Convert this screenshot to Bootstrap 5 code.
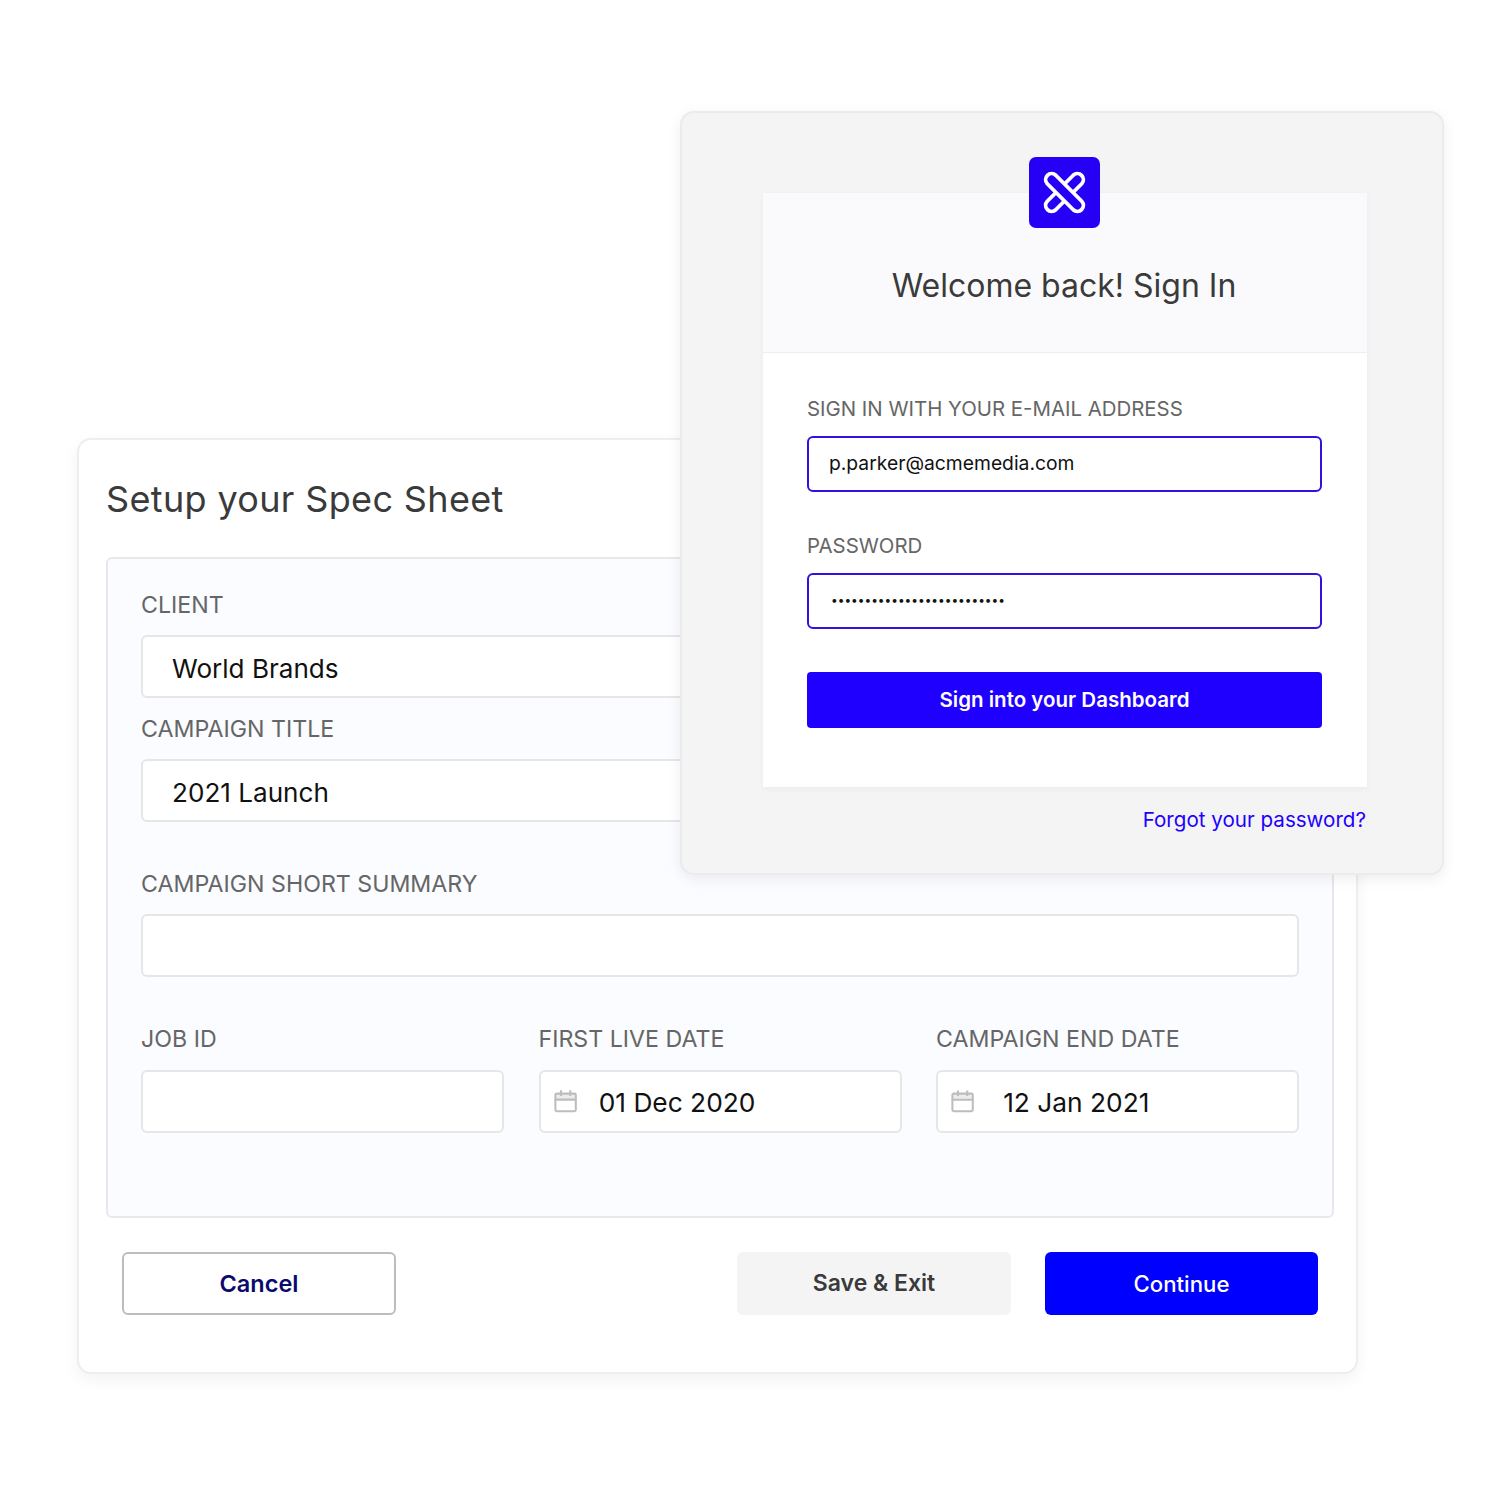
<!DOCTYPE html>
<html lang="en">
<head>
    <meta charset="UTF-8">
    <title>Spec Sheet and Sign In</title>
    <link href="https://cdn.jsdelivr.net/npm/bootstrap@5.3.3/dist/css/bootstrap.min.css" rel="stylesheet">
    <style>
        body { font-family: Inter, "Liberation Sans", sans-serif; background: #fff; margin: 0; }
        .canvas { position: relative; width: 1500px; height: 1500px; overflow: hidden; }

        /* the two windows sit freely on the canvas */
        .win { position: absolute; border-radius: 14px; }
        .win-spec { left: 77px; top: 438px; width: 1281px; height: 936px; background: #fff; border: 2px solid #eeeeee; box-shadow: 0 6px 16px rgba(0,0,0,.05); padding: 0 22px 0 27px; }
        .win-login { left: 680px; top: 111px; width: 764px; height: 764px; background: #f4f4f4; border: 2px solid #ebebeb; box-shadow: 0 4px 14px rgba(0,0,0,.07); padding: 80px 75px 0 81px; }

        .spec-title { font-size: 36px; font-weight: 400; color: #3a3a3a; letter-spacing: .35px; line-height: 44px; margin: 37px 0 36px; }
        .spec-panel { height: 661px; background: #fafcff; border: 2px solid #e8e8e8; border-radius: 6px; padding: 31px 33px 0; }
        .spec-label { display: block; font-size: 23.2px; line-height: 30px; color: #666; margin: 0 0 15px; }
        .spec-input.form-control { height: 63px; font-size: 26.1px; color: #111; background: #fff; border: 2px solid #e6e6e6; border-radius: 6px; padding: 3px 29px 0; box-shadow: none; }
        .spec-date { display: flex; align-items: center; height: 63px; background: #fff; border: 2px solid #e6e6e6; border-radius: 6px; padding-left: 13px; }
        .spec-date .form-control { border: 0; background: transparent; font-size: 26.3px; color: #111; padding: 3px 0 0 22px; box-shadow: none; }
        .spec-date .date-end { padding-left: 29px; }
        .spec-gap { margin-top: 47px; }
        .spec-cols { display: grid; grid-template-columns: repeat(3, 363px); column-gap: 34.5px; margin-top: 47px; }
        .spec-cols .spec-label { margin-bottom: 16px; }
        .spec-actions { padding: 34px 16px 0; }
        .act-btn { height: 63px; width: 274px; border-radius: 6px; padding: 0; }
        .act-cancel { color: #0a0a6e; font-size: 23.5px; font-weight: 600; background: #fff; border: 2px solid #bdbdbd; }
        .act-save { color: #3a3a3a; font-size: 23px; font-weight: 600; background: #f4f4f4; border: 0; margin-right: 34px; }
        .act-go { color: #fff; font-size: 22.2px; font-weight: 500; background: #0000ff; border: 0; width: 273px; }

        .login-panel { position: relative; background: #fff; box-shadow: 0 2px 6px rgba(0,0,0,.04); height: 594px; }
        .login-logo { position: absolute; left: 266px; top: -36px; width: 71px; height: 71px; display: block; }
        .login-head { height: 160px; background: #fafafc; border-bottom: 1px solid #eeeeee; padding: 71px 2px 0 0; text-align: center; font-size: 32px; line-height: 44px; color: #3a3a3a; }
        .login-form { padding: 41px 45px 0 44px; }
        .login-label { display: block; font-size: 20.4px; line-height: 30px; color: #666; margin: 0 0 12px; }
        .login-input.form-control { height: 56px; font-size: 19.3px; color: #111; border: 2px solid #2d12e0; border-radius: 6px; padding: 0 20px 3px; box-shadow: none; margin-bottom: 39px; }
        .login-input.login-pass { font-size: 11.9px; padding: 0 22px 3px; margin-bottom: 43px; }
        .login-btn { display: block; width: 100%; height: 56px; background: #1f00ff; color: #fff; font-size: 20.5px; font-weight: 600; border: 0; border-radius: 4px; padding: 0; }
        .login-forgot { display: block; text-align: right; color: #1f00ff; font-size: 20.6px; line-height: 30px; text-decoration: none; margin-top: 18px; padding-right: 1px; }
    </style>
</head>
<body>
    <div class="canvas">

        <div class="win win-spec">
            <h1 class="spec-title">Setup your Spec Sheet</h1>
            <div class="spec-panel">
                <label class="spec-label">CLIENT</label>
                <input class="form-control spec-input mb-3" value="World Brands">
                <label class="spec-label">CAMPAIGN TITLE</label>
                <input class="form-control spec-input" value="2021 Launch">
                <label class="spec-label spec-gap">CAMPAIGN SHORT SUMMARY</label>
                <input class="form-control spec-input">
                <div class="spec-cols">
                    <div>
                        <label class="spec-label">JOB ID</label>
                        <input class="form-control spec-input">
                    </div>
                    <div>
                        <label class="spec-label">FIRST LIVE DATE</label>
                        <div class="spec-date">
                            <svg width="25" height="25" viewBox="0 0 25 25" fill="none" stroke="#bdbdbd" stroke-width="2.2"><path d="M1.5 10.5V5.5a1.5 1.5 0 0 1 1.5-1.5h19a1.5 1.5 0 0 1 1.5 1.5v5z" fill="#ececec"/><path d="M1.5 10.5v11a1.5 1.5 0 0 0 1.5 1.5h19a1.5 1.5 0 0 0 1.5-1.5v-11M7.5 0.5v6M17.5 0.5v6"/></svg>
                            <input class="form-control" value="01 Dec 2020">
                        </div>
                    </div>
                    <div>
                        <label class="spec-label">CAMPAIGN END DATE</label>
                        <div class="spec-date">
                            <svg width="25" height="25" viewBox="0 0 25 25" fill="none" stroke="#bdbdbd" stroke-width="2.2"><path d="M1.5 10.5V5.5a1.5 1.5 0 0 1 1.5-1.5h19a1.5 1.5 0 0 1 1.5 1.5v5z" fill="#ececec"/><path d="M1.5 10.5v11a1.5 1.5 0 0 0 1.5 1.5h19a1.5 1.5 0 0 0 1.5-1.5v-11M7.5 0.5v6M17.5 0.5v6"/></svg>
                            <input class="form-control date-end" value="12 Jan 2021">
                        </div>
                    </div>
                </div>
            </div>
            <div class="spec-actions d-flex align-items-center">
                <button class="btn act-btn act-cancel">Cancel</button>
                <button class="btn act-btn act-save ms-auto">Save &amp; Exit</button>
                <button class="btn act-btn act-go">Continue</button>
            </div>
        </div>

        <div class="win win-login">
            <div class="login-panel">
                <svg class="login-logo" viewBox="0 0 71 71">
                    <rect width="71" height="71" rx="7" fill="#2500f5"/>
                    <g fill="none" stroke="#fff" stroke-width="3.8" stroke-linejoin="round">
                        <path d="M26.74 18.26L52.74 44.26A6 6 0 0 1 44.26 52.74L18.26 26.74A6 6 0 0 1 26.74 18.26Z"/>
                        <path d="M35.5 27.02L44.26 18.26A6 6 0 0 1 52.74 26.74L43.98 35.5"/>
                        <path d="M35.5 43.98L26.74 52.74A6 6 0 0 1 18.26 44.26L27.02 35.5"/>
                    </g>
                </svg>
                <div class="login-head">Welcome back! Sign In</div>
                <div class="login-form">
                    <label class="login-label">SIGN IN WITH YOUR E-MAIL ADDRESS</label>
                    <input class="form-control login-input" value="p.parker@acmemedia.com">
                    <label class="login-label">PASSWORD</label>
                    <input class="form-control login-input login-pass" type="password" value="abcdefghijklmnopqrstuvwxyz">
                    <button class="login-btn">Sign into your Dashboard</button>
                </div>
            </div>
            <a class="login-forgot" href="#">Forgot your password?</a>
        </div>

    </div>
    <script src="https://cdn.jsdelivr.net/npm/bootstrap@5.3.3/dist/js/bootstrap.bundle.min.js"></script>
</body>
</html>
